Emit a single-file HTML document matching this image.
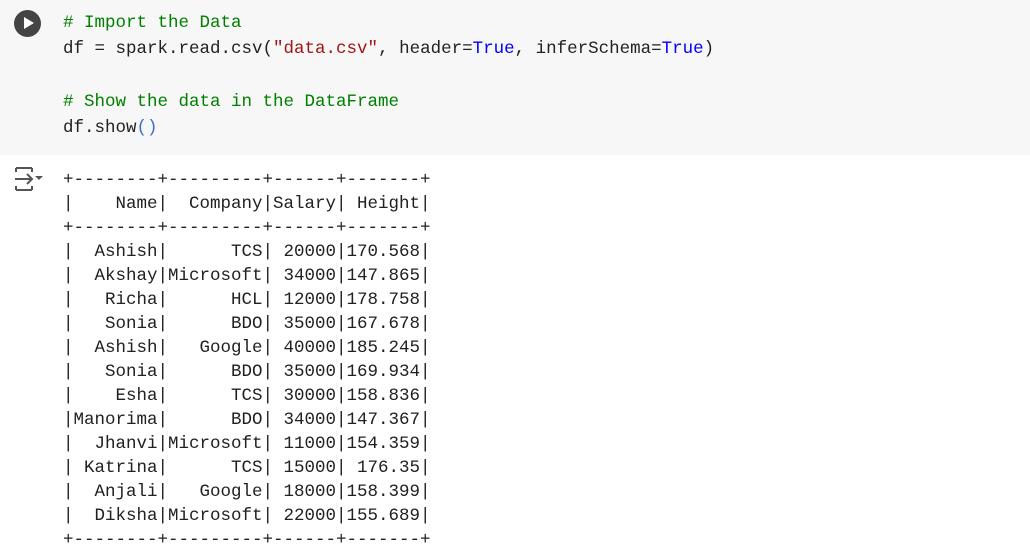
<!DOCTYPE html>
<html><head><style>
body{margin:0;width:1030px;height:553px;background:#fff;overflow:hidden;font-family:"Liberation Mono",monospace;}
.cell{position:absolute;left:0;top:0;width:1030px;height:155px;background:#f7f7f7;}
.play{position:absolute;left:14px;top:10px;width:27px;height:27px;border-radius:50%;background:#444;}
.play:after{content:"";position:absolute;left:10px;top:7px;border-left:10px solid #fff;border-top:6.5px solid transparent;border-bottom:6.5px solid transparent;}
pre{margin:0;position:absolute;left:63px;font-family:"Liberation Mono",monospace;font-size:17.5px;color:#222;}
.code{top:10px;line-height:26.3px;}
.out{top:168px;line-height:24px;color:#212121;}
.c{color:#008000}.s{color:#a31515}.k{color:#0000ff}.p{color:#3a6fd8}
</style></head><body>
<div class="cell"><div class="play"></div>
<pre class="code"><span class="c"># Import the Data</span>
df = spark.read.csv(<span class="s">"data.csv"</span>, header=<span class="k">True</span>, inferSchema=<span class="k">True</span>)

<span class="c"># Show the data in the DataFrame</span>
df.show<span class="p">()</span></pre></div>
<svg style="position:absolute;left:13px;top:166px" width="32" height="26" viewBox="0 0 32 26" fill="none" stroke="#555" stroke-width="2">
<path d="M3 2h16M3 24h16M3 2v4M3 20v4M19 2v4M19 20v4"/><path d="M2 13h17M14 8l5 5-5 5"/><path d="M22 10h8l-4 4z" fill="#555" stroke="none"/></svg>
<pre class="out">+--------+---------+------+-------+
|    Name|  Company|Salary| Height|
+--------+---------+------+-------+
|  Ashish|      TCS| 20000|170.568|
|  Akshay|Microsoft| 34000|147.865|
|   Richa|      HCL| 12000|178.758|
|   Sonia|      BDO| 35000|167.678|
|  Ashish|   Google| 40000|185.245|
|   Sonia|      BDO| 35000|169.934|
|    Esha|      TCS| 30000|158.836|
|Manorima|      BDO| 34000|147.367|
|  Jhanvi|Microsoft| 11000|154.359|
| Katrina|      TCS| 15000| 176.35|
|  Anjali|   Google| 18000|158.399|
|  Diksha|Microsoft| 22000|155.689|
+--------+---------+------+-------+</pre>
</body></html>
